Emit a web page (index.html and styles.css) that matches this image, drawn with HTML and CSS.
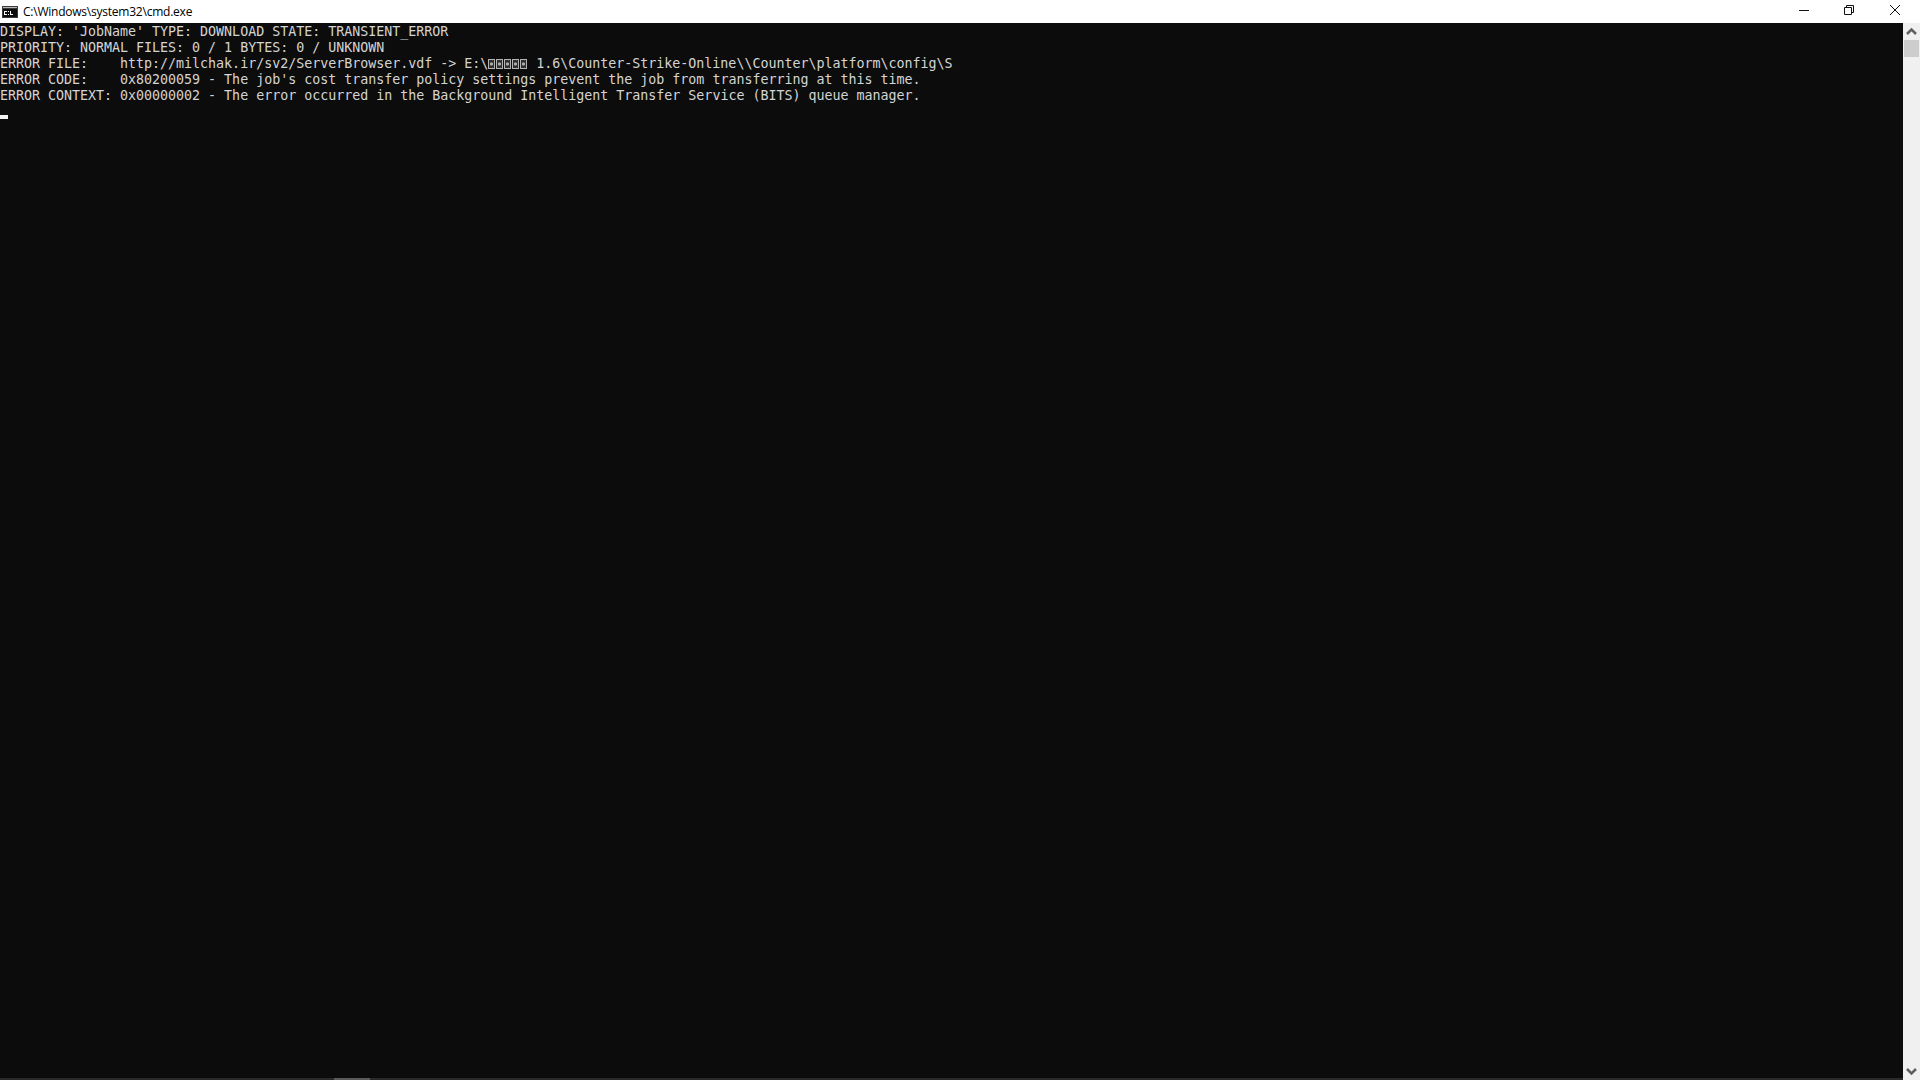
FILE: index.html
```html
<!DOCTYPE html>
<html lang="en">
<head>
<meta charset="utf-8">
<title>cmd.exe</title>
<link rel="stylesheet" href="styles.css">
</head>
<body>
<div class="window">
  <header class="titlebar">
    <svg class="app-icon" width="16" height="16" viewBox="0 0 16 16">
      <rect x="0" y="2" width="16" height="12" fill="#3a3a3a"/>
      <rect x="1" y="5" width="14" height="8" fill="#0c0c0c"/>
      <rect x="1" y="3" width="14" height="1" fill="#b8b8b8"/>
      <rect x="2" y="7" width="3" height="1" fill="#fff"/><rect x="2" y="8" width="1" height="2" fill="#fff"/><rect x="2" y="10" width="3" height="1" fill="#fff"/>
      <rect x="6" y="7" width="1" height="1" fill="#fff"/><rect x="6" y="10" width="1" height="1" fill="#fff"/>
      <rect x="8" y="7" width="1" height="4" fill="#fff"/><rect x="8" y="10" width="3" height="1" fill="#fff"/>
    </svg>
    <span class="title">C:\Windows\system32\cmd.exe</span>
    <div class="controls">
      <svg width="46" height="20" viewBox="0 0 46 20"><path d="M19 10.5H29" stroke="#111" fill="none"/></svg>
      <svg width="46" height="20" viewBox="0 0 46 20"><path d="M18.5 7.500h7v7h-7zM20.500 7.500v-2h7v7h-2" stroke="#111" fill="none"/></svg>
      <svg width="46" height="20" viewBox="0 0 46 20"><path d="M18 5L28 15M28 5L18 15" stroke="#111" fill="none"/></svg>
    </div>
  </header>
  <div class="client">
    <main class="console">
      <div class="output">
        <div class="line">DISPLAY: 'JobName' TYPE: DOWNLOAD STATE: TRANSIENT_ERROR</div>
        <div class="line">PRIORITY: NORMAL FILES: 0 / 1 BYTES: 0 / UNKNOWN</div>
        <div class="line">ERROR FILE:    http://milchak.ir/sv2/ServerBrowser.vdf -&gt; E:\<span class="tofu"></span><span class="tofu"></span><span class="tofu"></span><span class="tofu"></span><span class="tofu"></span> 1.6\Counter-Strike-Online\\Counter\platform\config\S</div>
        <div class="line">ERROR CODE:    0x80200059 - The job's cost transfer policy settings prevent the job from transferring at this time.</div>
        <div class="line">ERROR CONTEXT: 0x00000002 - The error occurred in the Background Intelligent Transfer Service (BITS) queue manager.</div>
      </div>
      <div class="cursor"></div>
      <div class="hscroll"><div class="hthumb"></div></div>
    </main>
    <aside class="vscroll">
      <svg class="arrow" width="17" height="17" viewBox="0 0 17 17"><path d="M4 11L8.500 6.500L13 11" stroke="#606060" stroke-width="2.500" fill="none"/></svg>
      <div class="vthumb"></div>
      <div class="vspace"></div>
      <svg class="arrow" width="17" height="17" viewBox="0 0 17 17"><path d="M4 6L8.500 10.500L13 6" stroke="#606060" stroke-width="2.500" fill="none"/></svg>
    </aside>
  </div>
</div>
</body>
</html>
```
FILE: styles.css
```css
html, body { margin: 0; height: 100%; overflow: hidden; }
.window { display: flex; flex-direction: column; height: 1080px; width: 1920px; background: #fff; }
.titlebar { height: 23px; flex: none; display: flex; align-items: center; background: #fff; padding-left: 2px; }
.app-icon { flex: none; margin-right: 5px; }
.title { font: 12px/23px "Open Sans", "Liberation Sans", sans-serif; color: #000; letter-spacing: -0.23px; }
.controls { margin-left: auto; display: flex; height: 20px; align-self: flex-start; margin-right: 2px; }
.client { flex: 1; display: flex; min-height: 0; }
.console { flex: 1; background: #0c0c0c; display: flex; flex-direction: column; }
.output { padding-top: 1px; font: 13.33px/16px "DejaVu Sans Mono", "Liberation Mono", monospace; letter-spacing: -0.02px; color: #d4d4d4; }
.line { height: 16px; white-space: pre; overflow: hidden; }
.tofu { display: inline-block; width: 7px; height: 10px; margin-right: 1px; border: 1px solid #b4b4b4; box-sizing: border-box; vertical-align: -1px; background: radial-gradient(circle, #b4b4b4 1px, #303030 2px); }
.cursor { width: 8px; height: 4px; background: #f2f2f2; margin-top: 11px; }
.hscroll { margin-top: auto; height: 2px; background: #2a2a2a; display: flex; padding-left: 334px; }
.hthumb { width: 36px; height: 2px; background: #5a5a5a; }
.vscroll { width: 17px; flex: none; background: #f0f0f0; display: flex; flex-direction: column; align-items: center; }
.arrow { flex: none; display: block; }
.vthumb { width: 15px; height: 17px; background: #cdcdcd; flex: none; }
.vspace { flex: 1; }
```
